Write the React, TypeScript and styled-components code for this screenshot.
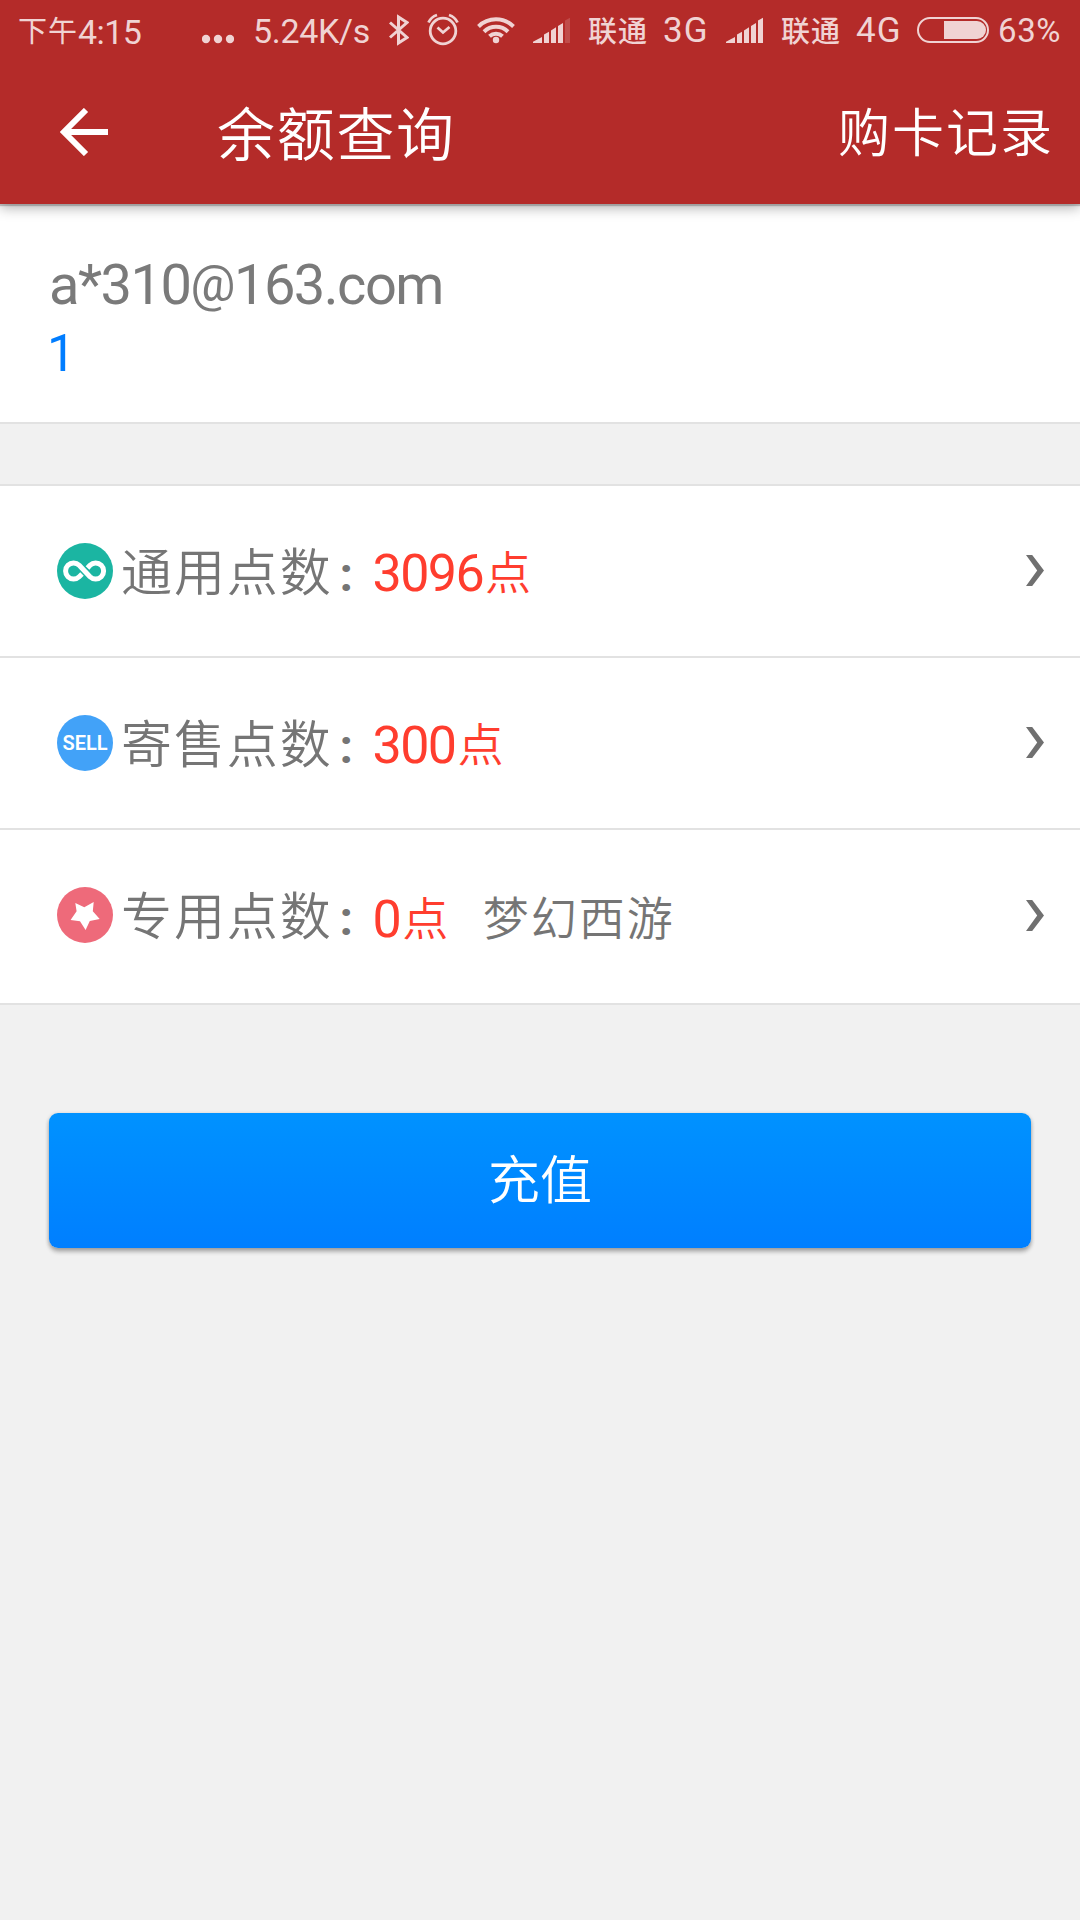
import React from "react";
import styled, { createGlobalStyle } from "styled-components";

const latin = `Roboto, "Noto Sans CJK SC", sans-serif`;
const han = `"Noto Sans CJK SC", sans-serif`;

const GlobalStyle = createGlobalStyle`
  * { box-sizing: border-box; }
  body { margin: 0; background: #f1f1f1; font-family: ${latin}; font-weight: 350; }
`;

const Screen = styled.div`
  width: 1080px;
  height: 1920px;
  overflow: hidden;
  background: #f1f1f1;
  display: flex;
  flex-direction: column;
`;

const Header = styled.header`
  height: 204px;
  flex: none;
  background: #b42b29;
  position: relative;
  box-shadow: 0 2px 1px rgba(0, 0, 0, 0.2), 0 4px 12px rgba(0, 0, 0, 0.3);
`;

const StatusBar = styled.div`
  display: flex;
  height: 62px;
  color: #f0d3d3;
  padding-left: 18px;
`;

const StatusText = styled.span<{ $w: number; $gap?: number; $size?: number; $track?: number }>`
  flex: none;
  width: ${(p) => p.$w}px;
  margin-left: ${(p) => p.$gap ?? 0}px;
  font-family: ${latin};
  font-weight: 400;
  font-size: ${(p) => p.$size ?? 34}px;
  letter-spacing: ${(p) => p.$track ?? 0}px;
  line-height: 62px;
  white-space: nowrap;
`;

const StatusHan = styled.span<{ $weight?: number }>`
  position: relative;
  top: -2px;
  font-family: ${han};
  font-size: 29px;
  font-weight: ${(p) => p.$weight ?? 400};
  letter-spacing: 1px;
`;

const StatusIcon = styled.svg<{ $gap: number }>`
  flex: none;
  height: 62px;
  margin-left: ${(p) => p.$gap}px;
  display: block;
`;

const TitleBar = styled.div`
  display: flex;
  align-items: center;
  height: 142px;
  padding: 0 26px 0 60px;
  color: #fff;
`;

const BackIcon = styled.svg`
  flex: none;
  display: block;
  margin-bottom: 2px;
`;

const Title = styled.h1`
  margin: 0 0 5px 109px;
  flex: 1;
  font: 350 58px/80px ${han};
  letter-spacing: 1.7px;
`;

const HeaderLink = styled.span`
  margin-bottom: 6px;
  font: 350 52px/80px ${han};
  letter-spacing: 2px;
`;

const Account = styled.section`
  height: 220px;
  flex: none;
  background: #fff;
  border-bottom: 2px solid #e2e2e2;
  padding: 43px 0 0 49px;
`;

const Email = styled.div`
  height: 76px;
  font-size: 56px;
  font-weight: 400;
  line-height: 76px;
  letter-spacing: -1.5px;
  color: #7a7a7a;
`;

const AtSign = styled.span`
  position: relative;
  top: -3px;
  font-size: 50px;
`;

const AccountId = styled.div`
  margin-left: -2px;
  font-size: 51px;
  font-weight: 400;
  line-height: 62px;
  color: #007dff;
`;

const List = styled.section`
  flex: none;
  margin-top: 60px;
  border-top: 2px solid #e2e2e2;
  background: #fff;
`;

const Row = styled.div<{ $last?: boolean }>`
  height: ${(p) => (p.$last ? 175 : 172)}px;
  padding: 0 36px ${(p) => (p.$last ? 3 : 0)}px 57px;
  border-bottom: 2px solid #e2e2e2;
  display: flex;
  align-items: center;
`;

const RowText = styled.div`
  flex: 1;
  display: flex;
  align-items: baseline;
  margin-left: 8px;
  padding-top: 2px;
  line-height: 80px;
  color: #757575;
`;

const Label = styled.span`
  font-family: ${han};
  font-size: 51px;
  font-weight: 350;
  letter-spacing: 1.9px;
`;

const Colon = styled.span`
  width: 40px;
  padding-left: 7px;
  font-size: 48px;
  font-weight: 700;
`;

const Points = styled.span<{ $drop?: number }>`
  position: relative;
  top: ${(p) => p.$drop ?? 0}px;
  font-size: 52px;
  font-weight: 400;
  letter-spacing: -1.6px;
  color: #ff3d2e;
`;

const Unit = styled.span`
  position: relative;
  top: -2px;
  font-family: ${han};
  font-size: 46px;
  font-weight: 350;
  margin-left: 2px;
`;

const Game = styled.span`
  font-family: ${han};
  font-size: 46px;
  font-weight: 350;
  letter-spacing: 2px;
  margin-left: 36px;
`;

const Badge = styled.span<{ $color: string }>`
  flex: none;
  width: 56px;
  height: 56px;
  border-radius: 50%;
  background: ${(p) => p.$color};
  color: #fff;
  display: flex;
  align-items: center;
  justify-content: center;
  font-size: 20px;
  font-weight: 600;
  line-height: 59px;
`;

const Glyph = styled.svg`
  display: block;
  width: 56px;
  height: 56px;
`;

const Recharge = styled.button`
  flex: none;
  margin: 108px 49px 0;
  height: 135px;
  padding: 0 0 7px;
  border: 0;
  border-radius: 9px;
  background: linear-gradient(#0092ff, #007fff);
  box-shadow: 0 4px 4px rgba(0, 0, 0, 0.24), 0 1px 4px rgba(0, 0, 0, 0.2);
  color: #fff;
  font: 350 52px/80px ${han};
`;

const Signal = ({ gap, weak }: { gap: number; weak?: boolean }) => (
  <StatusIcon $gap={gap} width="37" viewBox="0 0 37 62" fill="#f0d3d3">
    <path d="M0 43v-1.3L9 37v6z" />
    <path d="M11 43v-8.5l5-2.7V43z" />
    <path d="M18 43V30.5l5-3.2V43z" />
    <path d="M25 43V26l5-3v20z" />
    <path d="M32 43V20.5l5-2.7V43z" opacity={weak ? 0.2 : 1} />
  </StatusIcon>
);

const ChevronIcon = styled.svg<{ $drop?: number }>`
  flex: none;
  display: block;
  margin-top: ${(p) => p.$drop ?? 0}px;
`;

const Chevron = ({ drop }: { drop?: number }) => (
  <ChevronIcon $drop={drop} width="18" height="32" viewBox="0 0 18 32">
    <path d="M0 0h6.2L18 15.5 6.2 31H0l11.2-15.5z" fill="#707070" />
  </ChevronIcon>
);

export default function App() {
  return (
    <Screen>
      <GlobalStyle />
      <Header>
        <StatusBar>
          <StatusText $w={126} $track={-0.6}>
            <StatusHan>下午</StatusHan>4:15
          </StatusText>
          <StatusIcon $gap={58} width="32" viewBox="0 0 32 62" fill="#f0d3d3">
            <circle cx="4" cy="39" r="4.2" />
            <circle cx="16" cy="39" r="4.2" />
            <circle cx="28" cy="39" r="4.2" />
          </StatusIcon>
          <StatusText $w={118} $gap={19} $track={-0.3}>5.24K/s</StatusText>
          <StatusIcon $gap={18} width="20" viewBox="0 0 20 62" fill="none" stroke="#f0d3d3" strokeWidth="3">
            <path d="M1 22.5 18 37.5 9.5 43V17L18 22.5 1 37.5" />
          </StatusIcon>
          <StatusIcon $gap={18} width="32" viewBox="0 0 32 62" fill="none" stroke="#f0d3d3" strokeWidth="2.8">
            <circle cx="16" cy="31" r="12.8" />
            <path d="M10.5 27.5 16 32.5l6.5-5.5" />
            <path d="M1.5 22.5Q4 17 10 15M30.500 22.5Q28 17 22 15" />
          </StatusIcon>
          <StatusIcon $gap={18} width="38" viewBox="0 0 38 62" fill="none" stroke="#f0d3d3" strokeWidth="4">
            <path d="M1.500 26.500a25 25 0 0 1 35 0" />
            <path d="M7 31.700a17.300 17.300 0 0 1 24 0" />
            <path d="M12.500 36.300a9.500 9.500 0 0 1 13 0" />
            <circle cx="19" cy="40" r="3.200" fill="#f0d3d3" stroke="none" />
          </StatusIcon>
          <Signal gap={18} weak />
          <StatusText $w={60} $gap={18}>
            <StatusHan $weight={500}>联通</StatusHan>
          </StatusText>
          <StatusText $w={45} $gap={15} $size={35} $track={1}>3G</StatusText>
          <Signal gap={18} />
          <StatusText $w={60} $gap={18}>
            <StatusHan $weight={500}>联通</StatusHan>
          </StatusText>
          <StatusText $w={45} $gap={15} $size={35} $track={1}>4G</StatusText>
          <StatusIcon $gap={16} width="72" viewBox="0 0 72 62">
            <rect x="1" y="18" width="70" height="24" rx="12" fill="none" stroke="#f0d3d3" strokeWidth="2" />
            <path d="M27 21h33a9 9 0 0 1 0 18H27z" fill="#f0d3d3" />
          </StatusIcon>
          <StatusText $w={66} $gap={9} $size={33} $track={0.6}>63%</StatusText>
        </StatusBar>
        <TitleBar>
          <BackIcon width="48" height="48" viewBox="0 0 48 48" fill="none" stroke="#fff" strokeWidth="6">
            <path d="M26 2 4 24l22 22M4 24h44" />
          </BackIcon>
          <Title>余额查询</Title>
          <HeaderLink>购卡记录</HeaderLink>
        </TitleBar>
      </Header>
      <Account>
        <Email>a*310<AtSign>@</AtSign>163.com</Email>
        <AccountId>1</AccountId>
      </Account>
      <List>
        <Row>
          <Badge $color="#1bb5a2">
            <Glyph viewBox="0 0 56 56" fill="none" stroke="#fff" strokeWidth="5">
              <path d="M25 31 22.200 33.700A8 8 0 1 1 22.200 22.300L33 33.700A8 8 0 1 0 33 22.300L30.500 25" />
            </Glyph>
          </Badge>
          <RowText>
            <Label>通用点数</Label>
            <Colon>:</Colon>
            <Points>3096<Unit>点</Unit></Points>
          </RowText>
          <Chevron />
        </Row>
        <Row>
          <Badge $color="#42a2f8">SELL</Badge>
          <RowText>
            <Label>寄售点数</Label>
            <Colon>:</Colon>
            <Points>300<Unit>点</Unit></Points>
          </RowText>
          <Chevron />
        </Row>
        <Row $last>
          <Badge $color="#ee6a7a">
            <Glyph viewBox="0 0 56 56" fill="#fff">
              <path d="M18.300 16 27.300 20.300 36.700 15 35.800 24.300 42.700 32 32.800 34 28.600 43 23 34.300 13.600 33 19.600 24.300z" />
            </Glyph>
          </Badge>
          <RowText>
            <Label>专用点数</Label>
            <Colon>:</Colon>
            <Points $drop={2}>0<Unit>点</Unit></Points>
            <Game>梦幻西游</Game>
          </RowText>
          <Chevron drop={2} />
        </Row>
      </List>
      <Recharge>充值</Recharge>
    </Screen>
  );
}
